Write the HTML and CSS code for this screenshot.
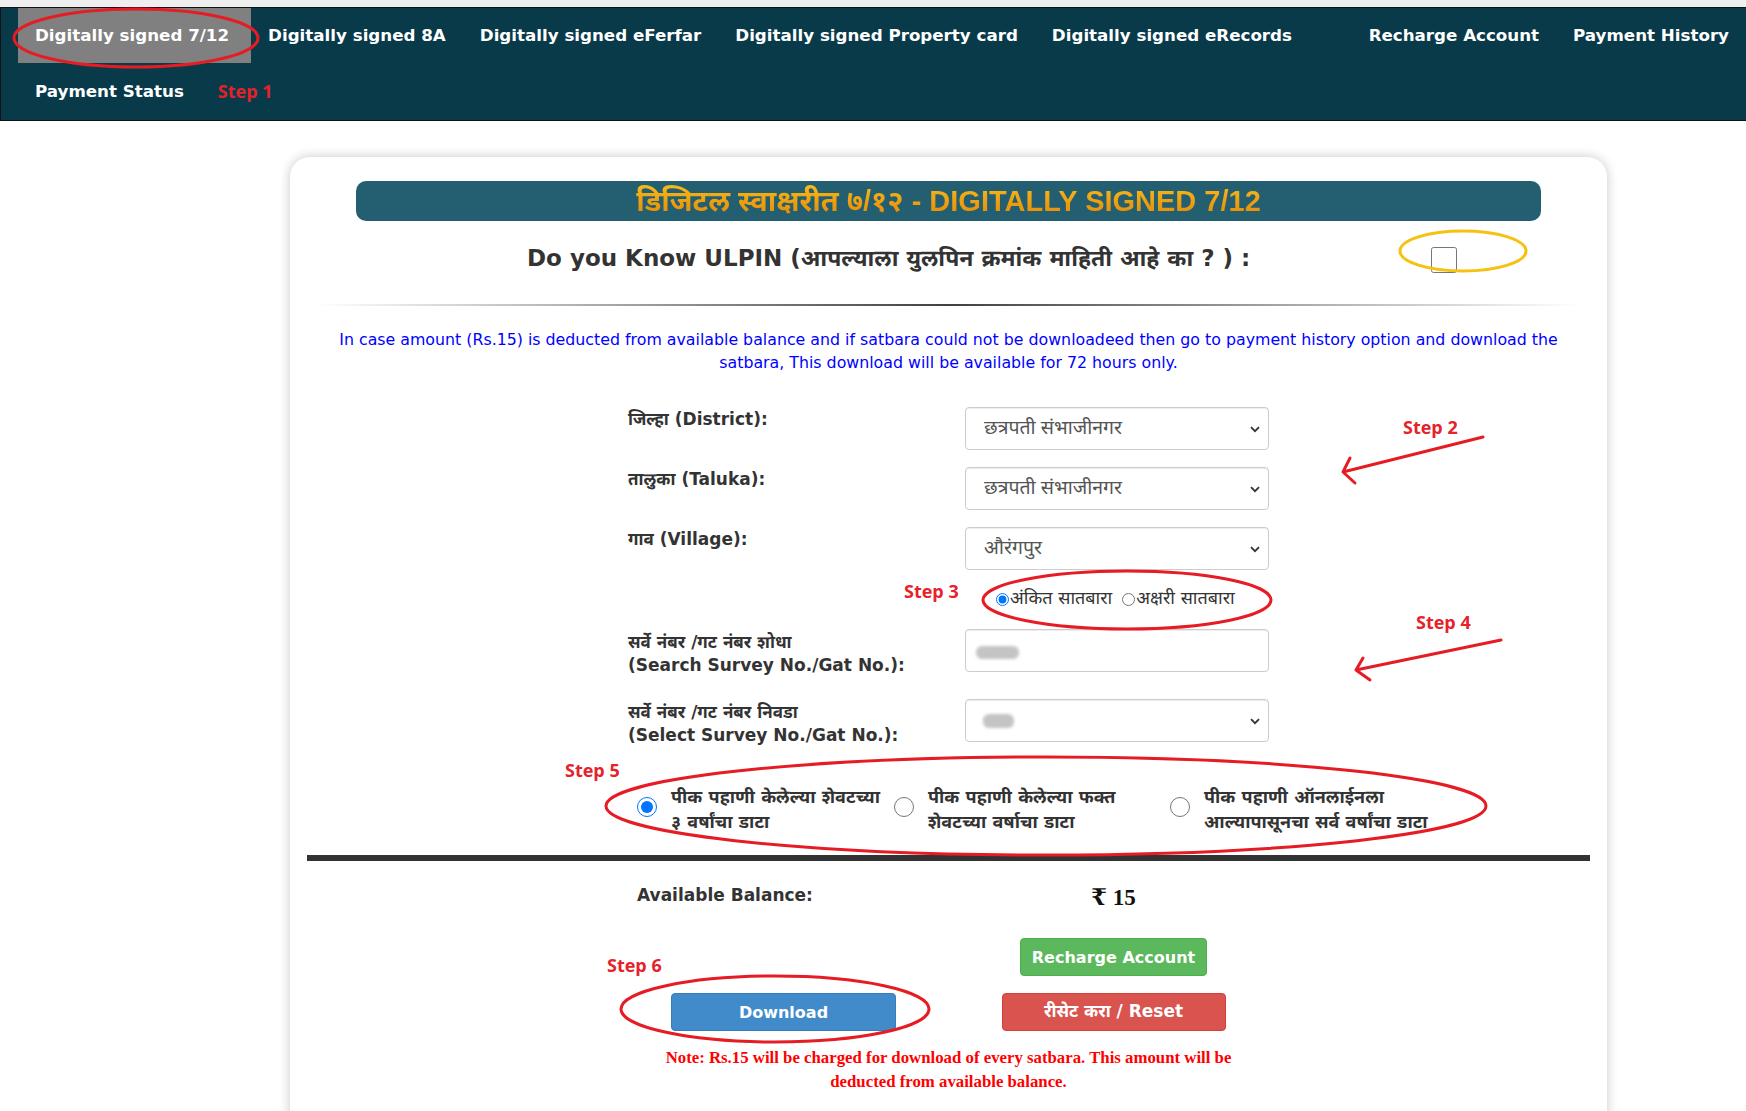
FILE: index.html
```html
<!DOCTYPE html>
<html lang="mr">
<head>
<meta charset="utf-8">
<title>Digitally signed 7/12</title>
<link rel="stylesheet" href="styles.css">
</head>
<body>
<div class="topstrip"></div>
<nav class="nav">
  <div class="nav-row">
    <a class="nav-item active" href="#">Digitally signed 7/12</a>
    <a class="nav-item" href="#">Digitally signed 8A</a>
    <a class="nav-item" href="#">Digitally signed eFerfar</a>
    <a class="nav-item" href="#">Digitally signed Property card</a>
    <a class="nav-item" href="#">Digitally signed eRecords</a>
    <a class="nav-item push" href="#">Recharge Account</a>
    <a class="nav-item" href="#">Payment History</a>
  </div>
  <div class="nav-row nav-row2">
    <a class="nav-item" href="#">Payment Status</a>
    <span class="nav-item nav-step">Step 1</span>
  </div>
</nav>

<main class="card">
  <div class="title"><span class="title-text">डिजिटल स्वाक्षरीत ७/१२ - DIGITALLY SIGNED 7/12</span></div>

  <div class="ulpin">
    <span class="ulpin-text">Do you Know ULPIN (आपल्याला युलपिन क्रमांक माहिती आहे का ? ) :</span>
    <input class="ulpin-check" type="checkbox">
  </div>

  <div class="divider"></div>

  <p class="notice">In case amount (Rs.15) is deducted from available balance and if satbara could not be downloadeed then go to payment history option and download the<br>satbara, This download will be available for 72 hours only.</p>

  <div class="form">
    <div class="row">
      <label class="lbl">जिल्हा (District):</label>
      <div class="select">
        <select><option>छत्रपती संभाजीनगर</option></select>
        <svg class="chev" width="10" height="7" viewBox="0 0 10 7"><path d="M1 1.2 L5 5.2 L9 1.2" fill="none" stroke="#333" stroke-width="1.8"/></svg>
      </div>
    </div>
    <div class="row">
      <label class="lbl">तालुका (Taluka):</label>
      <div class="select">
        <select><option>छत्रपती संभाजीनगर</option></select>
        <svg class="chev" width="10" height="7" viewBox="0 0 10 7"><path d="M1 1.2 L5 5.2 L9 1.2" fill="none" stroke="#333" stroke-width="1.8"/></svg>
      </div>
    </div>
    <div class="row">
      <label class="lbl">गाव (Village):</label>
      <div class="select">
        <select><option>औरंगपुर</option></select>
        <svg class="chev" width="10" height="7" viewBox="0 0 10 7"><path d="M1 1.2 L5 5.2 L9 1.2" fill="none" stroke="#333" stroke-width="1.8"/></svg>
      </div>
    </div>
    <div class="row row-type">
      <span class="lbl"></span>
      <div class="type-opts">
        <label class="type-opt"><input type="radio" name="type" checked>अंकित सातबारा</label>
        <label class="type-opt"><input type="radio" name="type">अक्षरी सातबारा</label>
      </div>
    </div>
    <div class="row row-search">
      <label class="lbl lbl-two">सर्वे नंबर /गट नंबर शोधा<br>(Search Survey No./Gat No.):</label>
      <div class="field"><span class="blob blob-a"></span></div>
    </div>
    <div class="row row-pick">
      <label class="lbl lbl-two">सर्वे नंबर /गट नंबर निवडा<br>(Select Survey No./Gat No.):</label>
      <div class="select">
        <span class="blob blob-b"></span>
        <svg class="chev" width="10" height="7" viewBox="0 0 10 7"><path d="M1 1.2 L5 5.2 L9 1.2" fill="none" stroke="#333" stroke-width="1.8"/></svg>
      </div>
    </div>
  </div>

  <div class="crop">
    <label class="crop-opt"><input type="radio" name="crop" checked><span>पीक पहाणी केलेल्या शेवटच्या<br>३ वर्षांचा डाटा</span></label>
    <label class="crop-opt"><input type="radio" name="crop"><span>पीक पहाणी केलेल्या फक्त<br>शेवटच्या वर्षाचा डाटा</span></label>
    <label class="crop-opt"><input type="radio" name="crop"><span>पीक पहाणी ऑनलाईनला<br>आल्यापासूनचा सर्व वर्षांचा डाटा</span></label>
  </div>

  <div class="rule"></div>

  <div class="bottom">
    <div class="cell cell-left bal-label">Available Balance:</div>
    <div class="cell bal-value">₹ 15</div>
    <div class="cell"></div>
    <div class="cell btn-row2"><button class="btn btn-green">Recharge Account</button></div>
    <div class="cell btn-row3"><button class="btn btn-blue">Download</button></div>
    <div class="cell btn-row3"><button class="btn btn-red">रीसेट करा / Reset</button></div>
  </div>

  <p class="note">Note: Rs.15 will be charged for download of every satbara. This amount will be<br>deducted from available balance.</p>
</main>

<div class="annot">
  <svg class="annot-svg" width="1746" height="1111" viewBox="0 0 1746 1111">
    <g fill="none" stroke="#e61c24" stroke-width="3" stroke-linecap="round" stroke-linejoin="round">
      <ellipse cx="136" cy="38" rx="122" ry="29"/>
      <ellipse cx="1127" cy="600" rx="144" ry="29"/>
      <ellipse cx="1046" cy="806" rx="440" ry="49"/>
      <ellipse cx="775" cy="1009" rx="154" ry="33"/>
      <path d="M1483 437 L1343 472 M1350 458 L1343 472 L1355 483"/>
      <path d="M1501 640 L1356 670 M1363 658 L1356 670 L1370 680"/>
    </g>
    <ellipse cx="1463" cy="251" rx="63" ry="20" fill="none" stroke="#f5c211" stroke-width="3"/>
  </svg>
  <span class="step-label s2">Step 2</span>
  <span class="step-label s3">Step 3</span>
  <span class="step-label s4">Step 4</span>
  <span class="step-label s5">Step 5</span>
  <span class="step-label s6">Step 6</span>
</div>
</body>
</html>
```

FILE: styles.css
```css
html, body {
  margin: 0;
  height: 1111px;
  overflow: hidden;
}
body {
  position: relative;
  background: #fff;
  color: #333;
  font-family: "DejaVu Sans", "Noto Sans Devanagari", "Lohit Devanagari", sans-serif;
}
.topstrip {
  height: 7px;
  background: #efefef;
}
.nav {
  background: #083a4a;
  border-top: 1px solid #111;
  border-bottom: 1px solid #111;
  border-left: 1px solid #111;
}
.nav-row {
  display: flex;
  padding-left: 17px;
  height: 55px;
}
.nav-row2 {
  height: 57px;
}
.nav-item {
  display: block;
  padding: 0 17px;
  line-height: 55px;
  color: #fff;
  font-weight: bold;
  font-size: 16.7px;
  text-decoration: none;
  white-space: nowrap;
}
.nav-row2 .nav-item {
  line-height: 57px;
}
.nav-item.active {
  background: #808080;
  padding: 0 22px 0 17px;
}
.nav-item.push {
  margin-left: auto;
}
.nav-step {
  color: #e0232b;
  font-family: "Open Sans", sans-serif;
  font-size: 18px;
}

.card {
  width: 1317px;
  box-sizing: border-box;
  margin: 36px 0 0 290px;
  padding: 24px 17px 0;
  min-height: 980px;
  border-radius: 20px;
  background: #fff;
  box-shadow: 0 0 12px rgba(0, 0, 0, 0.22);
}
.title {
  margin: 0 49px;
  height: 40px;
  border-radius: 10px;
  background: #245e71;
  text-align: center;
  line-height: 40px;
  font-family: "Liberation Sans", "Noto Sans Devanagari", sans-serif;
  font-weight: bold;
  font-size: 29px;
}
.title-text {
  background: linear-gradient(#f8b91c, #e38a04);
  -webkit-background-clip: text;
  background-clip: text;
  color: transparent;
}
.ulpin {
  display: flex;
  align-items: center;
  height: 40px;
  margin-top: 19px;
}
.ulpin-text {
  padding-left: 220px;
  font-weight: bold;
  font-size: 23px;
  color: #333;
  white-space: nowrap;
}
.ulpin-check {
  margin: 0 133px 0 auto;
  width: 26px;
  height: 26px;
}
.divider {
  height: 2px;
  margin: 24px 9px 0;
  background: linear-gradient(to right, rgba(0,0,0,0), rgba(0,0,0,0.75), rgba(0,0,0,0));
}
.notice {
  margin: 22px 0 0;
  color: #0000ff;
  font-size: 15.8px;
  line-height: 23px;
  text-align: center;
}

.form {
  margin: 33px 0 0 321px;
  width: 641px;
}
.row {
  display: flex;
}
.row + .row {
  margin-top: 17px;
}
.lbl {
  width: 337px;
  flex: none;
  font-weight: bold;
  font-size: 17px;
  line-height: 24px;
  color: #333;
}
.lbl-two {
  line-height: 23px;
  padding-top: 2px;
}
.select, .field {
  position: relative;
  width: 304px;
  height: 43px;
  box-sizing: border-box;
  border: 1px solid #ccc;
  border-radius: 4px;
  box-shadow: inset 0 1px 1px rgba(0, 0, 0, 0.075);
  background: #fff;
}
.select select {
  -webkit-appearance: none;
  appearance: none;
  width: 100%;
  height: 100%;
  border: 0;
  background: transparent;
  padding: 2px 18px 0;
  font-family: "Noto Sans Devanagari", "Noto Serif Devanagari", "DejaVu Sans", sans-serif;
  font-size: 19.5px;
  color: #555;
  outline: none;
}
.chev {
  position: absolute;
  right: 8px;
  top: 18px;
}
.row.row-type {
  margin-top: 15px;
  height: 28px;
  align-items: center;
}
.type-opts {
  display: flex;
  gap: 10px;
  padding-left: 31px;
}
.type-opt {
  display: flex;
  align-items: center;
  font-size: 18px;
  color: #333;
  white-space: nowrap;
}
.type-opt input {
  width: 13px;
  height: 13px;
  margin: 0 1px 0 0;
}
.row.row-search {
  margin-top: 16px;
}
.row.row-pick {
  margin-top: 22px;
}
.blob {
  position: absolute;
  background: #c4c4c4;
  border-radius: 6px;
  filter: blur(1.5px);
}
.blob-a {
  left: 10px;
  top: 16px;
  width: 43px;
  height: 13px;
}
.blob-b {
  left: 17px;
  top: 14px;
  width: 31px;
  height: 14px;
}

.crop {
  display: grid;
  grid-template-columns: 257px 276px auto;
  margin: 37px 0 0 330px;
}
.crop-opt {
  display: flex;
  align-items: center;
  font-weight: bold;
  font-size: 18px;
  line-height: 25px;
  color: #333;
  white-space: nowrap;
}
.crop-opt input {
  width: 20px;
  height: 20px;
  margin: 0 14px 4px 0;
  flex: none;
}
.rule {
  height: 6px;
  background: #333;
  margin-top: 21px;
}

.bottom {
  display: grid;
  grid-template-columns: 293px 367px;
  margin: 22px 0 0 330px;
}
.cell {
  display: flex;
  justify-content: center;
}
.cell-left {
  justify-content: flex-start;
}
.bal-label {
  font-weight: bold;
  font-size: 17px;
  line-height: 24px;
  height: 30px;
  color: #333;
}
.bal-value {
  font-family: "Liberation Serif", "DejaVu Serif", serif;
  font-weight: bold;
  font-size: 23px;
  line-height: 30px;
  color: #111;
}
.btn-row2 {
  margin-top: 25px;
}
.btn-row3 {
  margin-top: 17px;
}
.btn {
  height: 38px;
  border-radius: 4px;
  border: 1px solid transparent;
  color: #fff;
  font-family: "DejaVu Sans", "Noto Sans Devanagari", sans-serif;
  font-weight: bold;
  font-size: 16px;
  padding: 0;
  cursor: pointer;
}
.btn-green {
  width: 187px;
  background: #5cb85c;
  border-color: #4cae4c;
}
.btn-blue {
  width: 225px;
  background: #428bca;
  border-color: #357ebd;
}
.btn-red {
  width: 224px;
  font-size: 17px;
  background: #d9534f;
  border-color: #d43f3a;
}
.note {
  margin: 15px 0 0;
  text-align: center;
  color: #ff0000;
  font-family: "Liberation Serif", serif;
  font-weight: bold;
  font-size: 16.8px;
  line-height: 24px;
}

.annot {
  position: absolute;
  left: 0;
  top: 0;
  width: 1746px;
  height: 1111px;
  pointer-events: none;
}
.annot-svg {
  position: absolute;
  left: 0;
  top: 0;
}
.step-label {
  position: absolute;
  color: #e6222b;
  font-family: "Open Sans", sans-serif;
  font-weight: bold;
  font-size: 18px;
  line-height: 24px;
}
.s2 { left: 1403px; top: 415px; }
.s3 { left: 904px; top: 579px; }
.s4 { left: 1416px; top: 610px; }
.s5 { left: 565px; top: 758px; }
.s6 { left: 607px; top: 953px; }
```
